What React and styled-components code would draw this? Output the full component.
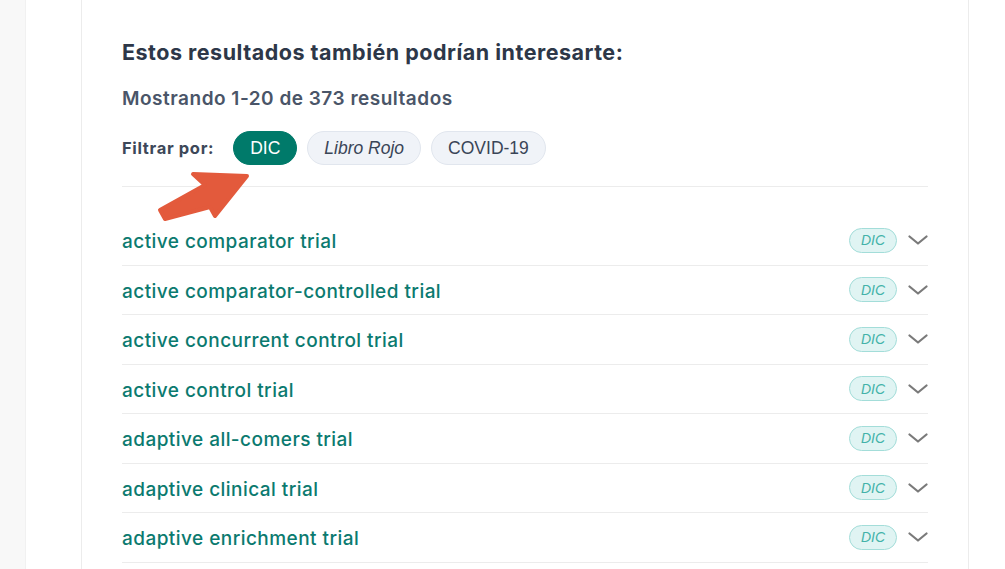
import React from "react";
import styled, { createGlobalStyle } from "styled-components";

const GlobalStyle = createGlobalStyle`
  html, body { margin: 0; padding: 0; background: #ffffff; }
  body {
    overflow: hidden;
    font-family: Inter, "Noto Sans", sans-serif;
    font-variation-settings: "opsz" 14;
    font-optical-sizing: none;
  }
  * { box-sizing: border-box; }
`;

const Page = styled.div`
  display: flex;
  width: 1005px;
  height: 569px;
  overflow: hidden;
  background: #ffffff;
`;

const Gutter = styled.aside`
  width: 26px;
  flex: none;
  background: #f8f8f8;
  box-shadow: inset -1px 0 0 #f1f1f1;
`;

const Main = styled.main`
  flex: 1;
  display: flex;
  padding-left: 55px;
`;

const Card = styled.section`
  position: relative;
  width: 888px;
  flex: none;
  border-left: 1px solid #ececec;
  border-right: 1px solid #ececec;
  padding: 38px 40px 0;
`;

const Heading = styled.h2`
  margin: 0;
  font-size: 21.5px;
  line-height: 28px;
  font-weight: 700;
  letter-spacing: 0.5px;
  color: #2d3748;
`;

const Count = styled.p`
  margin: 19.5px 0 0;
  font-size: 19px;
  line-height: 26px;
  font-weight: 600;
  letter-spacing: 0.5px;
  color: #4a5568;
`;

const FilterBar = styled.div`
  display: flex;
  align-items: center;
  gap: 10px;
  margin-top: 19.5px;
  padding-bottom: 21px;
  border-bottom: 1px solid #ececec;
`;

const FilterLabel = styled.span`
  font-size: 16.5px;
  font-weight: 700;
  letter-spacing: 0.65px;
  color: #3d4859;
  margin-right: 9px;
`;

const Chip = styled.button`
  height: 34px;
  padding: 0 16px;
  border-radius: 17px;
  font-family: "Liberation Sans", Arial, sans-serif;
  font-size: 17.5px;
  font-style: ${(p) => (p.$italic ? "italic" : "normal")};
  cursor: pointer;
  border: 1px solid ${(p) => (p.$active ? "#007a6a" : "#e1e6ee")};
  background: ${(p) => (p.$active ? "#007a6a" : "#f0f3f8")};
  color: ${(p) => (p.$active ? "#ffffff" : "#3a4557")};
`;

const List = styled.ul`
  list-style: none;
  margin: 29px 0 0;
  padding: 0;
`;

const Row = styled.li`
  display: flex;
  align-items: center;
  padding: 11px 0;
  border-bottom: 1px solid #ececec;
`;

const Term = styled.a`
  flex: 1;
  font-size: 19px;
  line-height: 26.5px;
  font-weight: 500;
  letter-spacing: 0.45px;
  color: #0b7a6f;
  text-decoration: none;
  transform: translateY(1.5px);
`;

const Badge = styled.span`
  height: 25px;
  display: inline-flex;
  align-items: center;
  padding: 0 11px;
  border-radius: 13px;
  border: 1px solid #a3ddd9;
  background: #e0f4f3;
  color: #43b2a9;
  font-family: "Liberation Sans", Arial, sans-serif;
  font-style: italic;
  font-size: 14px;
`;

const Toggle = styled.span`
  display: inline-flex;
  margin-left: 11px;
  width: 20px;
  justify-content: center;
`;

const ArrowMark = styled.svg`
  position: absolute;
  left: 68px;
  top: 160px;
  overflow: visible;
`;

const Chevron = () => (
  <svg width="20" height="10" viewBox="0 0 20 10" fill="none">
    <path d="M1.5 1.5 L10 8.5 L18.5 1.5" stroke="#7a7a7a" strokeWidth="2.2" strokeLinecap="round" strokeLinejoin="round" />
  </svg>
);

const terms = [
  "active comparator trial",
  "active comparator-controlled trial",
  "active concurrent control trial",
  "active control trial",
  "adaptive all-comers trial",
  "adaptive clinical trial",
  "adaptive enrichment trial",
];

export default function App() {
  return (
    <>
      <GlobalStyle />
      <Page>
        <Gutter />
        <Main>
          <Card>
            <Heading>Estos resultados también podrían interesarte:</Heading>
            <Count>Mostrando 1-20 de 373 resultados</Count>
            <FilterBar>
              <FilterLabel>Filtrar por:</FilterLabel>
              <Chip $active>DIC</Chip>
              <Chip $italic>Libro Rojo</Chip>
              <Chip>COVID-19</Chip>
            </FilterBar>
            <List>
              {terms.map((t) => (
                <Row key={t}>
                  <Term href="#">{t}</Term>
                  <Badge>DIC</Badge>
                  <Toggle>
                    <Chevron />
                  </Toggle>
                </Row>
              ))}
            </List>
            <ArrowMark width="110" height="65" viewBox="0 0 110 65">
              <polygon
                points="43,14 97,16 65,56 60,47 15,59 10,50 55,25"
                fill="#e35a3c"
                stroke="#e35a3c"
                strokeWidth="4"
                strokeLinejoin="round"
              />
            </ArrowMark>
          </Card>
        </Main>
      </Page>
    </>
  );
}
